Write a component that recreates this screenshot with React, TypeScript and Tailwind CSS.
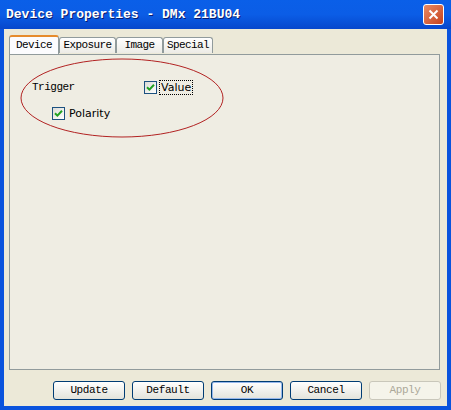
import React from 'react';

const mono = { fontFamily: '"Liberation Mono", "DejaVu Sans Mono", monospace' };

function Check({ label, focus }: { label: string; focus?: boolean }) {
  return (
    <div className="flex items-center gap-[3px]">
      <div className="w-[13px] h-[13px] border border-[#1C5180] bg-gradient-to-br from-[#DCDCD7] to-white flex items-center justify-center">
        <svg width="9" height="9" viewBox="0 0 9 9">
          <path d="M1 4.2 L3.4 6.6 L8 1.8" stroke="#21A121" strokeWidth="2" fill="none" />
        </svg>
      </div>
      <span
        className={`text-[11px] leading-[13px] text-black px-[1px] ${focus ? 'outline outline-1 outline-dotted outline-black' : ''}`}
        style={{ fontFamily: '"DejaVu Sans", Tahoma, sans-serif' }}
      >
        {label}
      </span>
    </div>
  );
}

function Tab({ label, active, w }: { label: string; active?: boolean; w: string }) {
  if (active) {
    return (
      <div className={`relative z-10 -mb-px h-[19px] ${w} bg-[#FCFCFE] border border-b-0 border-[#919B9C] border-t-[#E68B2C] border-t-2 rounded-t-[3px] flex items-center justify-center text-[11px] tracking-[-0.6px] text-black`} style={mono}>
        {label}
      </div>
    );
  }
  return (
    <div className={`mt-[2px] h-[16px] ${w} bg-gradient-to-b from-white to-[#ECEBE6] border border-b-0 border-[#919B9C] rounded-t-[3px] flex items-center justify-center text-[11px] tracking-[-0.6px] text-black`} style={mono}>
      {label}
    </div>
  );
}

function Btn({ label, disabled, def }: { label: string; disabled?: boolean; def?: boolean }) {
  return (
    <div
      className={`w-[72px] h-[19px] rounded-[3px] border flex items-center justify-center text-[11px] tracking-[-0.4px] ${
        disabled
          ? 'border-[#C9C7BA] bg-[#F5F4EA] text-[#ACA899]'
          : def
          ? 'border-[#003C74] bg-gradient-to-b from-white to-[#E3E3DB] text-black shadow-[inset_0_0_0_1px_#97B8EC]'
          : 'border-[#003C74] bg-gradient-to-b from-white to-[#E3E3DB] text-black'
      }`}
      style={mono}
    >
      {label}
    </div>
  );
}

export default function App() {
  return (
    <div className="w-[451px] h-[410px] flex flex-col bg-[#0A53DD] overflow-hidden">
      <div className="h-[29px] flex items-center justify-between pl-[6px] pr-[7px] bg-gradient-to-b from-[#0A5FE8] via-[#0B5DE6] to-[#0747CC]">
        <span
          className="text-white text-[13px] font-bold leading-none"
          style={{ ...mono, textShadow: '1px 1px 0 #0A1C6E' }}
        >
          Device Properties - DMx 21BU04
        </span>
        <div className="w-[21px] h-[21px] rounded-[3px] border border-white bg-gradient-to-br from-[#E98A63] to-[#C6401A] flex items-center justify-center">
          <svg width="11" height="11" viewBox="0 0 11 11">
            <path d="M1.5 1.5 L9.5 9.5 M9.5 1.5 L1.5 9.5" stroke="white" strokeWidth="2" />
          </svg>
        </div>
      </div>
      <div className="flex-1 mx-[4px] mb-[4px] bg-[#ECE9D8] flex flex-col px-[5px] pt-[6px]">
        <div className="flex items-start h-[19px]">
          <Tab label="Device" active w="w-[50px]" />
          <Tab label="Exposure" w="w-[57px]" />
          <Tab label="Image" w="w-[47px]" />
          <Tab label="Special" w="w-[50px]" />
        </div>
        <div className="relative h-[316px] mr-[2px] border border-[#919B9C] bg-[#EFEDE3] pt-[24px] pl-[22px]">
          <div className="flex items-center">
            <span className="w-[112px] text-[11px] tracking-[-0.5px] text-black" style={mono}>Trigger</span>
            <Check label="Value" focus />
          </div>
          <div className="mt-[11px] ml-[20px]">
            <Check label="Polarity" />
          </div>
          <svg className="absolute left-[10px] top-[3px]" width="206" height="82" viewBox="0 0 206 82">
            <ellipse cx="102" cy="40" rx="101" ry="39" fill="none" stroke="#B22222" strokeWidth="1" />
          </svg>
        </div>
        <div className="flex justify-end gap-[7px] mt-[11px] mr-[1px]">
          <Btn label="Update" />
          <Btn label="Default" />
          <Btn label="OK" def />
          <Btn label="Cancel" />
          <Btn label="Apply" disabled />
        </div>
      </div>
    </div>
  );
}
